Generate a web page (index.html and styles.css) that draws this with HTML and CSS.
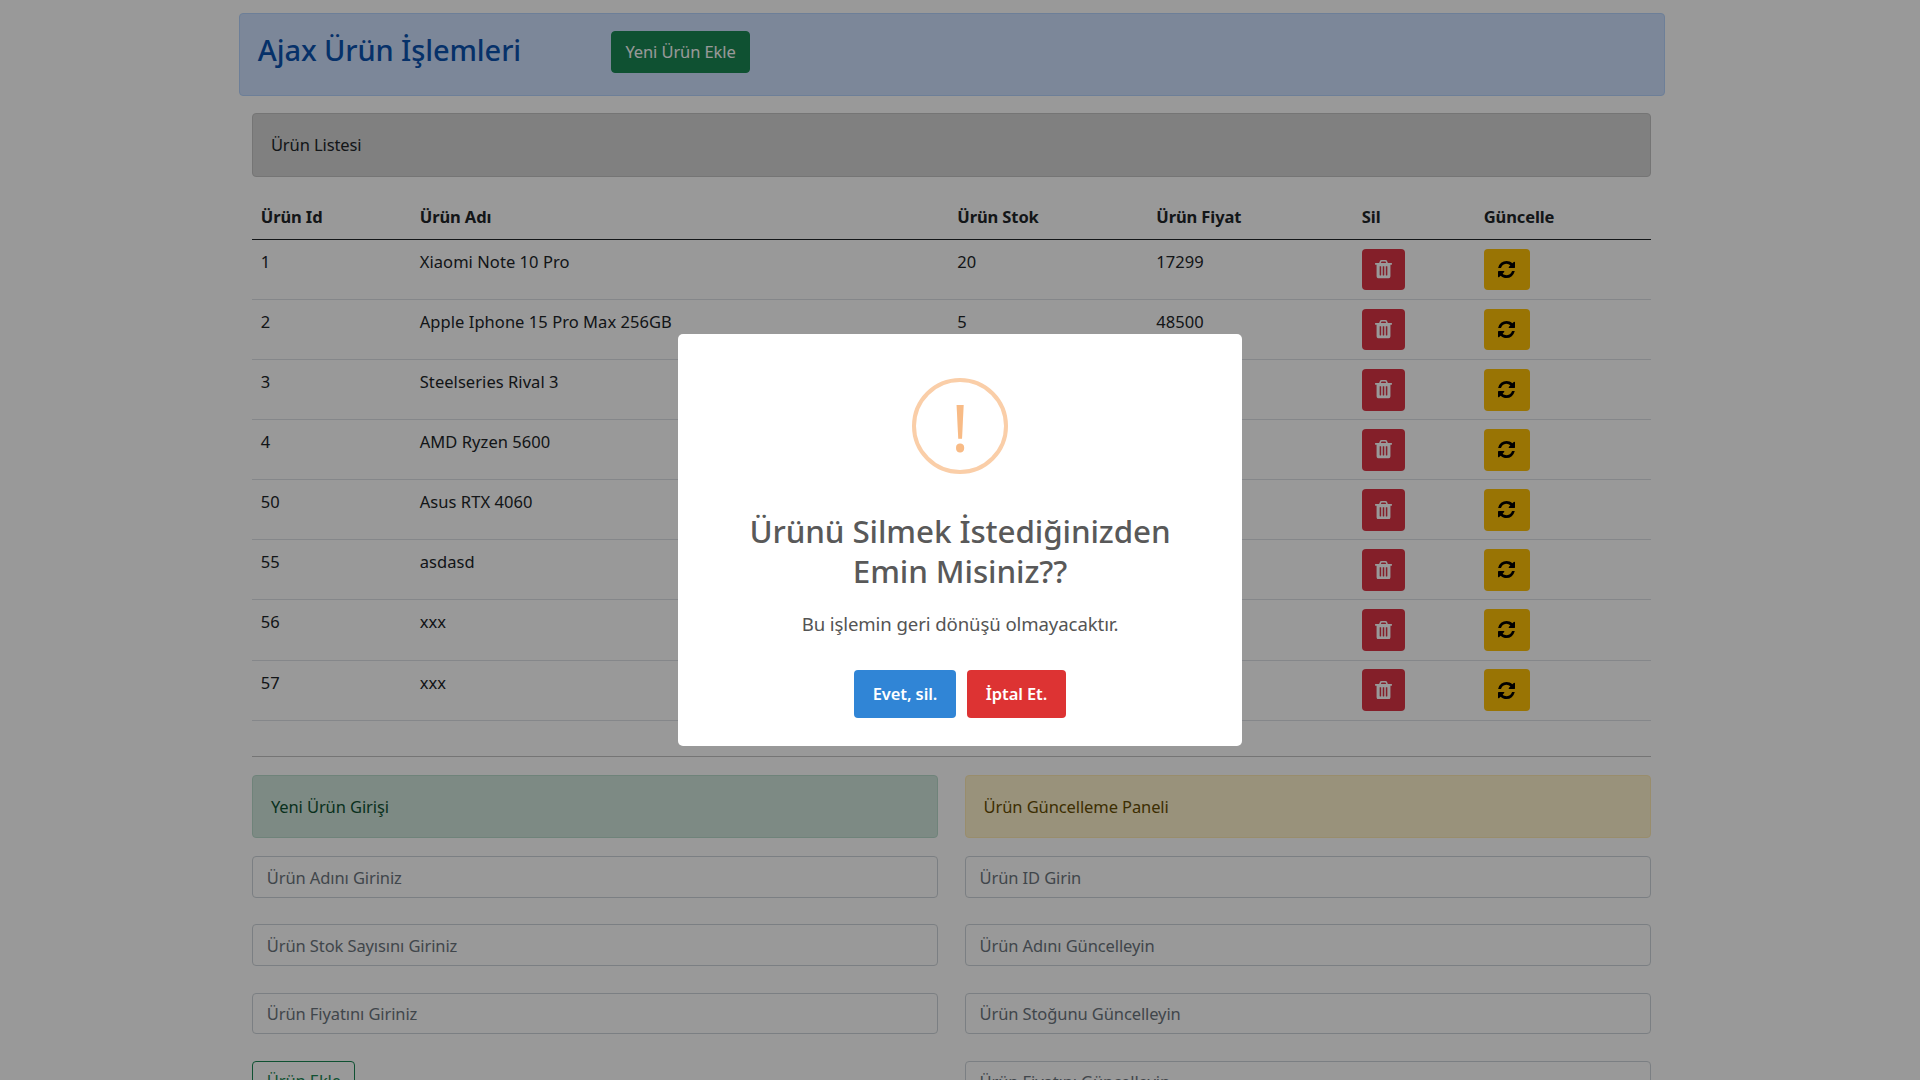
FILE: index.html
```html
<!DOCTYPE html>
<html lang="tr">
<head>
    <meta charset="UTF-8">
    <title>Ajax Ürün İşlemleri</title>
    <link rel="stylesheet" href="styles.css">
</head>
<body>
    <svg class="icon-defs" width="0" height="0">
        <symbol id="icon-trash" viewBox="0 0 1408 1536"><path d="M512 1248v-704q0-14-9-23t-23-9h-64q-14 0-23 9t-9 23v704q0 14 9 23t23 9h64q14 0 23-9t9-23zm256 0v-704q0-14-9-23t-23-9h-64q-14 0-23 9t-9 23v704q0 14 9 23t23 9h64q14 0 23-9t9-23zm256 0v-704q0-14-9-23t-23-9h-64q-14 0-23 9t-9 23v704q0 14 9 23t23 9h64q14 0 23-9t9-23zm-544-992h448l-48-117q-7-9-17-11h-317q-10 2-17 11zm928 32v64q0 14-9 23t-23 9h-96v948q0 83-47 143.5t-113 60.5h-832q-66 0-113-58.5t-47-141.5v-952h-96q-14 0-23-9t-9-23v-64q0-14 9-23t23-9h309l70-167q15-37 54-63t79-26h320q40 0 79 26t54 63l70 167h309q14 0 23 9t9 23z"/></symbol>
        <symbol id="icon-refresh" viewBox="128 128 1536 1536"><path d="M1639 1056q0 5-1 7-64 268-268 434.5t-478 166.5q-146 0-282.5-55t-243.5-157l-129 129q-19 19-45 19t-45-19-19-45v-448q0-26 19-45t45-19h448q26 0 45 19t19 45-19 45l-137 137q71 66 161 102t187 36q134 0 250-65t186-179q11-17 53-117 8-23 30-23h192q13 0 22.5 9.5t9.5 22.5zm25-800v448q0 26-19 45t-45 19h-448q-26 0-45-19t-19-45 19-45l138-138q-148-137-349-137-134 0-250 65t-186 179q-11 17-53 117-8 23-30 23h-199q-13 0-22.5-9.5t-9.5-22.5v-7q65-268 270-434.5t480-166.5q146 0 284 55.5t245 156.5l130-129q19-19 45-19t45 19 19 45z"/></symbol>
    </svg>

    <div class="container">
        <div class="page-header">
            <h2 class="page-title">Ajax Ürün İşlemleri</h2>
            <button class="btn btn-success" type="button">Yeni Ürün Ekle</button>
        </div>

        <div class="content">
            <div class="notice notice-secondary">Ürün Listesi</div>

            <table class="product-table">
                <colgroup>
                    <col class="col-id">
                    <col class="col-name">
                    <col class="col-stock">
                    <col class="col-price">
                    <col class="col-delete">
                    <col class="col-update">
                </colgroup>
                <thead>
                    <tr>
                        <th>Ürün Id</th>
                        <th>Ürün Adı</th>
                        <th>Ürün Stok</th>
                        <th>Ürün Fiyat</th>
                        <th>Sil</th>
                        <th>Güncelle</th>
                    </tr>
                </thead>
                <tbody>
                    <tr>
                        <td>1</td><td>Xiaomi Note 10 Pro</td><td>20</td><td>17299</td>
                        <td><button class="btn btn-delete" type="button"><svg class="icon-trash"><use href="#icon-trash"/></svg></button></td>
                        <td><button class="btn btn-update" type="button"><svg class="icon-refresh"><use href="#icon-refresh"/></svg></button></td>
                    </tr>
                    <tr>
                        <td>2</td><td>Apple Iphone 15 Pro Max 256GB</td><td>5</td><td>48500</td>
                        <td><button class="btn btn-delete" type="button"><svg class="icon-trash"><use href="#icon-trash"/></svg></button></td>
                        <td><button class="btn btn-update" type="button"><svg class="icon-refresh"><use href="#icon-refresh"/></svg></button></td>
                    </tr>
                    <tr>
                        <td>3</td><td>Steelseries Rival 3</td><td></td><td></td>
                        <td><button class="btn btn-delete" type="button"><svg class="icon-trash"><use href="#icon-trash"/></svg></button></td>
                        <td><button class="btn btn-update" type="button"><svg class="icon-refresh"><use href="#icon-refresh"/></svg></button></td>
                    </tr>
                    <tr>
                        <td>4</td><td>AMD Ryzen 5600</td><td></td><td></td>
                        <td><button class="btn btn-delete" type="button"><svg class="icon-trash"><use href="#icon-trash"/></svg></button></td>
                        <td><button class="btn btn-update" type="button"><svg class="icon-refresh"><use href="#icon-refresh"/></svg></button></td>
                    </tr>
                    <tr>
                        <td>50</td><td>Asus RTX 4060</td><td></td><td></td>
                        <td><button class="btn btn-delete" type="button"><svg class="icon-trash"><use href="#icon-trash"/></svg></button></td>
                        <td><button class="btn btn-update" type="button"><svg class="icon-refresh"><use href="#icon-refresh"/></svg></button></td>
                    </tr>
                    <tr>
                        <td>55</td><td>asdasd</td><td></td><td></td>
                        <td><button class="btn btn-delete" type="button"><svg class="icon-trash"><use href="#icon-trash"/></svg></button></td>
                        <td><button class="btn btn-update" type="button"><svg class="icon-refresh"><use href="#icon-refresh"/></svg></button></td>
                    </tr>
                    <tr>
                        <td>56</td><td>xxx</td><td></td><td></td>
                        <td><button class="btn btn-delete" type="button"><svg class="icon-trash"><use href="#icon-trash"/></svg></button></td>
                        <td><button class="btn btn-update" type="button"><svg class="icon-refresh"><use href="#icon-refresh"/></svg></button></td>
                    </tr>
                    <tr>
                        <td>57</td><td>xxx</td><td></td><td></td>
                        <td><button class="btn btn-delete" type="button"><svg class="icon-trash"><use href="#icon-trash"/></svg></button></td>
                        <td><button class="btn btn-update" type="button"><svg class="icon-refresh"><use href="#icon-refresh"/></svg></button></td>
                    </tr>
                </tbody>
            </table>

            <hr class="divider">

            <div class="form-columns">
                <form class="product-form">
                    <div class="notice notice-success">Yeni Ürün Girişi</div>
                    <input class="form-input" type="text" placeholder="Ürün Adını Giriniz">
                    <input class="form-input" type="text" placeholder="Ürün Stok Sayısını Giriniz">
                    <input class="form-input" type="text" placeholder="Ürün Fiyatını Giriniz">
                    <button class="btn btn-outline-success" type="button">Ürün Ekle</button>
                </form>
                <form class="product-form">
                    <div class="notice notice-warning">Ürün Güncelleme Paneli</div>
                    <input class="form-input" type="text" placeholder="Ürün ID Girin">
                    <input class="form-input" type="text" placeholder="Ürün Adını Güncelleyin">
                    <input class="form-input" type="text" placeholder="Ürün Stoğunu Güncelleyin">
                    <input class="form-input" type="text" placeholder="Ürün Fiyatını Güncelleyin">
                </form>
            </div>
        </div>
    </div>

    <div class="modal-backdrop">
        <div class="modal">
            <div class="modal-icon"><span class="modal-icon-mark">!</span></div>
            <h2 class="modal-title">Ürünü Silmek İstediğinizden<br>Emin Misiniz??</h2>
            <p class="modal-text">Bu işlemin geri dönüşü olmayacaktır.</p>
            <div class="modal-actions">
                <button class="modal-btn modal-confirm" type="button">Evet, sil.</button>
                <button class="modal-btn modal-cancel" type="button">İptal Et.</button>
            </div>
        </div>
    </div>
</body>
</html>
```

FILE: styles.css
```css
* {
    box-sizing: border-box;
}
html, body {
    height: 100%;
    overflow: hidden;
}
body {
    margin: 0;
    padding-right: 16px;
    font-family: "Noto Sans", "Open Sans", Arial, sans-serif;
    font-size: 16.5px;
    line-height: 26.4px;
    letter-spacing: -0.1px;
    color: #212529;
    background-color: #fff;
}
.icon-defs {
    position: absolute;
}
.container {
    width: 1452px;
    margin: 0 auto;
    padding: 13px 13.2px 0;
}
.page-header {
    display: flex;
    align-items: flex-start;
    height: 83px;
    padding: 17px 17.6px 0;
    margin-bottom: 17px;
    background-color: #cfe2ff;
    border: 1px solid #b6d4fe;
    border-radius: 4px;
}
.page-title {
    width: 353px;
    margin: 0;
    font-size: 29px;
    font-weight: 500;
    line-height: 38px;
    color: #0a52b0;
}
.content {
    padding: 0 14px 0 13.2px;
}
.btn {
    display: block;
    height: 41.8px;
    padding: 0 13.6px;
    font: inherit;
    letter-spacing: inherit;
    white-space: nowrap;
    border: 1px solid transparent;
    border-radius: 4px;
}
.btn-success {
    color: #fff;
    background-color: #198754;
    border-color: #198754;
}
.btn-delete {
    width: 43px;
    padding: 0;
    background-color: #dc3545;
}
.btn-update {
    width: 46px;
    padding: 0;
    background-color: #ffc107;
}
.btn-outline-success {
    width: 103px;
    padding: 0;
    color: #198754;
    background-color: transparent;
    border-color: #198754;
}
.icon-trash {
    display: block;
    width: 17px;
    height: 18.5px;
    margin: 0 auto;
    fill: #fff;
}
.icon-refresh {
    display: block;
    width: 17px;
    height: 17px;
    margin: 0 auto;
    fill: #000;
}
.notice {
    height: 64px;
    padding: 18px 17.5px 0;
    border: 1px solid transparent;
    border-radius: 4px;
}
.notice-secondary {
    background-color: #d5d5d5;
    border-color: #c4c4c4;
}
.notice-success {
    color: #0f5132;
    background-color: #d1e7dd;
    border-color: #badbcc;
}
.notice-warning {
    color: #664d03;
    background-color: #fff3cd;
    border-color: #ffecb5;
}
.product-table {
    width: 100%;
    margin: 17px 0 0;
    border-collapse: collapse;
    table-layout: fixed;
}
.col-id { width: 159px; }
.col-name { width: 537.5px; }
.col-stock { width: 199px; }
.col-price { width: 205.6px; }
.col-delete { width: 121.8px; }
.product-table th {
    height: 45px;
    padding: 9.5px 8.4px 9px;
    font-weight: 700;
    text-align: left;
    border-bottom: 1px solid #212529;
}
.product-table td {
    padding: 9px 8.4px 8.3px;
    vertical-align: top;
    letter-spacing: 0.05px;
    border-bottom: 1px solid #dee2e6;
}
.product-table td .btn {
    margin: -0.4px 0 0.4px;
}
.divider {
    height: 1px;
    margin: 35.2px 0 18px;
    background-color: #c4c4c4;
    border: 0;
}
.form-columns {
    display: grid;
    grid-template-columns: 1fr 1fr;
    column-gap: 27px;
}
.product-form {
    display: flex;
    flex-direction: column;
    align-items: flex-start;
    gap: 26.4px;
}
.product-form .notice {
    align-self: stretch;
    height: 63.6px;
    margin-bottom: -8.6px;
}
.form-input {
    width: 100%;
    height: 41.8px;
    padding: 0 13.4px;
    font: inherit;
    letter-spacing: inherit;
    color: #212529;
    background-color: #fff;
    border: 1px solid #ced4da;
    border-radius: 4px;
}
.form-input::placeholder {
    color: #6c757d;
    opacity: 1;
}

/* onay penceresi */
.modal-backdrop {
    position: fixed;
    top: 0;
    right: 0;
    bottom: 0;
    left: 0;
    display: flex;
    align-items: center;
    justify-content: center;
    background-color: rgba(0, 0, 0, 0.4);
}
.modal {
    width: 564px;
    height: 412px;
    padding-top: 44px;
    text-align: center;
    background-color: #fff;
    border-radius: 5px;
}
.modal-icon {
    display: flex;
    align-items: center;
    justify-content: center;
    width: 96px;
    height: 96px;
    margin: 0 auto 11px;
    border: 4px solid #facea8;
    border-radius: 50%;
}
.modal-icon-mark {
    font-size: 66px;
    font-weight: 400;
    line-height: 66px;
    color: #f8bb86;
}
.modal-title {
    margin: 0;
    padding-top: 26px;
    font-size: 31.4px;
    font-weight: 500;
    line-height: 40px;
    color: #595959;
}
.modal-text {
    margin: 20px 0 33px;
    font-size: 18.6px;
    color: #545454;
}
.modal-actions {
    display: flex;
    justify-content: center;
    gap: 11px;
}
.modal-btn {
    height: 48px;
    font: inherit;
    font-weight: 600;
    letter-spacing: inherit;
    color: #fff;
    border: 0;
    border-radius: 4px;
}
.modal-confirm {
    width: 102px;
    background-color: #3085d6;
}
.modal-cancel {
    width: 99px;
    background-color: #dd3333;
}
```
